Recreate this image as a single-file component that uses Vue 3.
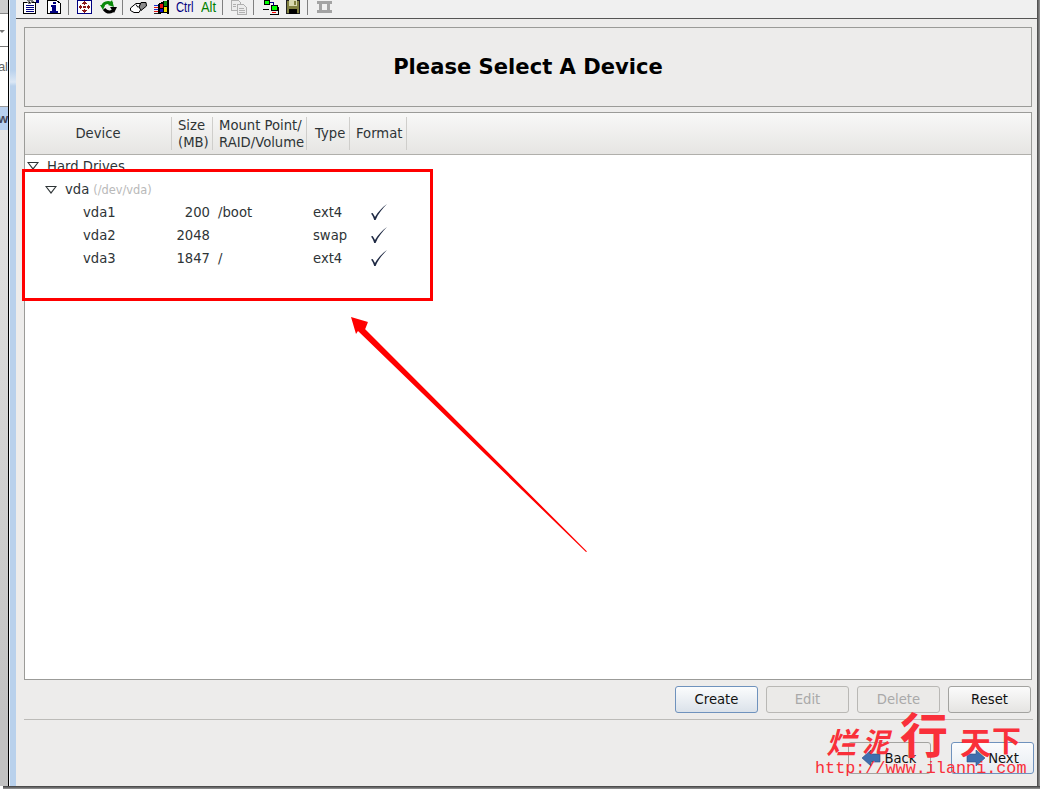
<script setup>
const columns = [
  { label: 'Device', cls: 'c-dev' },
  { label: 'Size\n(MB)', cls: 'c-size' },
  { label: 'Mount Point/\nRAID/Volume', cls: 'c-mount' },
  { label: 'Type', cls: 'c-type' },
  { label: 'Format', cls: 'c-fmt' }
]
const rows = [
  { name: 'vda1', size: '200', mount: '/boot', type: 'ext4' },
  { name: 'vda2', size: '2048', mount: '', type: 'swap' },
  { name: 'vda3', size: '1847', mount: '/', type: 'ext4' }
]
const actions = [
  { label: 'Create', cls: 'focus' },
  { label: 'Edit', cls: 'off' },
  { label: 'Delete', cls: 'off' },
  { label: 'Reset', cls: '' }
]
</script>

<template>
  <div class="screen">
    <div class="desk">
      <aside class="strip">
        <div class="s-top"></div>
        <div class="s-combo"><span class="s-caret"></span></div>
        <div class="s-text"><span>al</span></div>
        <div class="s-sel"><span>w</span></div>
        <div class="s-rest"></div>
      </aside>
      <div class="blue"></div>
      <main class="win">
        <div class="toolbar">
          <svg class="ic" width="16" height="15" viewBox="0 0 16 15" shape-rendering="crispEdges"><path d="M.5 2.500h12v11H.5z" fill="#fff" stroke="#000"/><path d="M3 5.500h8M3 7.500h8M3 9.500h8M3 11.500h8" stroke="#000080"/><path d="M4 0h6v1H4zM5 1h2v1H5zM8 1h3v1H8zM4 2h2v1H4zM7 2h2v1H7zM5 3h3v1H5z" fill="#777"/><path d="M13 0h3v3h-3z" fill="#000080"/></svg>
          <svg class="ic g2" width="14" height="15" viewBox="0 0 14 15" shape-rendering="crispEdges"><path d="M.5.500h9l4 3v10H.5z" fill="#fff" stroke="#000"/><path d="M6 2h3v2H6zM4 5h5v6h2v2H3v-2h2V7H4z" fill="#000080"/></svg>
          <i class="sep s1"></i>
          <svg class="ic g3" width="15" height="15" viewBox="0 0 15 15" shape-rendering="crispEdges"><path d="M.5.500h14v13H.5z" fill="#fff" stroke="#000080"/><path d="M7 1h1v1h1v1h1v1H8v1H7V4H5V3h1V2h1zM7 9h1v1h2v1H9v1H8v1H7v-1H6v-1H5v-1h2zM2 6h1V5h1v1h1v2H4v1H3V8H2zM10 6h1V5h1v1h1v2h-1v1h-1V8h-1z" fill="#8b1a1a"/><path d="M6 6h3v2H6z" fill="#8b1a1a"/></svg>
          <svg class="ic g4" width="17" height="15" viewBox="0 0 17 15"><path d="M2.500 7C3 3 8 1 12.500 4" fill="none" stroke="#0a8a0a" stroke-width="3"/><path d="M0 5l5 0-2 5zM12 0l2 7-6-2z" fill="#0a8a0a"/><path d="M4 9c3 4 8 4 10 0" fill="none" stroke="#000" stroke-width="3"/><path d="M10 7h7l-3 6z" fill="#000"/></svg>
          <i class="sep s2"></i>
          <svg class="ic g5" width="17" height="15" viewBox="0 0 17 15"><path d="M.5 8L6 3.500h5l-2 3 2 2.500-2 3.500H4L.5 10.500z" fill="#fff" stroke="#000"/><path d="M11 2.500h5l.5 3.500L11 10.500 9 7z" fill="#8a8a8a" stroke="#000"/><path d="M6 4.500l2 3" stroke="#000" fill="none"/></svg>
          <svg class="ic g6" width="16" height="15" viewBox="0 0 16 15" shape-rendering="crispEdges"><path d="M0 5h4v1H0zM0 9h4v1H0z" fill="#2030d0"/><path d="M0 7h4v1H0zM0 11h4v1H0z" fill="#e01010"/><path d="M0 13h4v1H0z" fill="#222"/><path d="M4 4l6-3 5-1v14l-5-1-6 1z" fill="#000"/><path d="M6 4h3v4H6z" fill="#f01010"/><path d="M10 1h3v5h-3z" fill="#108a10"/><path d="M6 9h3v3H6z" fill="#1010c0"/><path d="M10 7h3v5h-3z" fill="#f0e000"/></svg>
          <span class="key ctrl">Ctrl</span>
          <span class="key alt">Alt</span>
          <i class="sep s3"></i>
          <svg class="ic g7" width="16" height="15" viewBox="0 0 16 15" shape-rendering="crispEdges"><path d="M.5.500h7l2 2v8H.5z" fill="#ececec" stroke="#b0b0b0"/><path d="M6.500 4.500h6l3 3v7h-9z" fill="#ececec" stroke="#b0b0b0"/><path d="M8 8.500h5M8 10.500h6M8 12.500h6M2 4.500h3M2 6.500h3" stroke="#b0b0b0"/></svg>
          <i class="sep s4"></i>
          <svg class="ic g8" width="16" height="15" viewBox="0 0 16 15" shape-rendering="crispEdges"><path d="M1.500 .5h5v4h-5z" fill="#0f0" stroke="#000"/><path d="M8.500 5.500h6v5h-6z" fill="#0f0" stroke="#000"/><path d="M6.500 2.500h4v3" fill="none" stroke="#000080"/><path d="M0 9.500h6" stroke="#000"/><path d="M9 12.500h4" stroke="#f00"/><path d="M15.500 7v7.500H7" fill="none" stroke="#000"/></svg>
          <svg class="ic g9" width="14" height="15" viewBox="0 0 14 15" shape-rendering="crispEdges"><path d="M.5 0h13v13.500H.5z" fill="#808040" stroke="#222"/><path d="M3 0h8v6H3z" fill="#d8d8b0"/><path d="M3 9h8v5H3z" fill="#000"/><path d="M8 1h2v4H8z" fill="#808040"/></svg>
          <i class="sep s5"></i>
          <svg class="ic g10" width="15" height="15" viewBox="0 0 15 15" shape-rendering="crispEdges"><path d="M0 1h15v3h-2v6h2v3H0v-3h2V4H0z" fill="#a3a3a3"/><path d="M5 4h5v6H5z" fill="#f0f0f0"/></svg>
        </div>

        <div class="body">
          <header class="title"><h1>Please Select A Device</h1></header>

          <section class="table">
            <div class="thead">
              <div v-for="c in columns" :key="c.cls" class="th" :class="c.cls">{{ c.label }}</div>
              <div class="th-fill"></div>
            </div>
            <div class="tbody">
              <div class="tree-row l0"><span class="tri"></span><span>Hard Drives</span></div>
              <div class="tree-row l1"><span class="tri"></span><span>vda</span><small>(/dev/vda)</small></div>
              <div v-for="r in rows" :key="r.name" class="row">
                <span class="r-name">{{ r.name }}</span>
                <span class="r-size">{{ r.size }}</span>
                <span class="r-mount">{{ r.mount }}</span>
                <span class="r-type">{{ r.type }}</span>
                <svg class="r-check" width="17" height="17" viewBox="0 0 17 17"><path d="M1 9.500L2.700 9 5 13C8 8 12 3.500 17 0 12.500 4.500 8 10 5.600 16L4.200 16C3.500 13.500 2.500 11.500 1 9.500z" fill="#1f2a44"/></svg>
              </div>
            </div>
          </section>

          <div class="actions">
            <button v-for="a in actions" :key="a.label" class="btn" :class="a.cls">{{ a.label }}</button>
          </div>
          <div class="rule"></div>
          <div class="nav">
            <button class="btn nav-btn back">
              <svg width="19" height="16" viewBox="0 0 19 16"><path d="M0 8L9 0v4h9v8H9v4z" fill="#3f6fae" stroke="#2c4f85" stroke-width=".6"/></svg>
              <span>Back</span>
            </button>
            <button class="btn nav-btn focus next">
              <svg width="19" height="16" viewBox="0 0 19 16"><path d="M19 8L10 0v4H1v8h9v4z" fill="#3f6fae" stroke="#2c4f85" stroke-width=".6"/></svg>
              <span>Next</span>
            </button>
          </div>
        </div>
      </main>
      <div class="edge"></div>
    </div>
    <div class="foot"></div>

    <div class="redbox"></div>
    <svg class="arrow" width="260" height="255" viewBox="0 0 260 255">
      <path d="M11 12L28 17 22 21 247 246.500 246 247 18 26 16 29z" fill="#f00"/>
      <path d="M20 21L28 17 24 27 247 246.500z" fill="#f00"/>
    </svg>
    <div class="mark">
      <span class="m1">烂</span><span class="m2">泥</span><span class="m3">行</span><span class="m4">天</span><span class="m5">下</span>
      <span class="url">http://www.ilanni.com</span>
    </div>
  </div>
</template>

<style>
html, body { margin: 0; background: #fff; overflow: hidden; }
</style>

<style scoped>
.screen {
  position: relative;
  width: 1041px;
  height: 790px;
  display: flex;
  flex-direction: column;
  overflow: hidden;
  background: #fff;
  font-family: "DejaVu Sans", sans-serif;
  font-size: 13.2px;
  color: #2e3436;
}
.desk { display: flex; height: 786px; flex: none; }
.foot {
  height: 3px;
  flex: none;
  margin: 0 1px 0 3px;
  background: linear-gradient(#3c3c3c, #999);
}
.strip {
  width: 8px;
  flex: none;
  display: flex;
  flex-direction: column;
  background: #fff;
  overflow: hidden;
  font-family: "Liberation Sans", sans-serif;
  font-size: 13px;
}
.s-top { height: 13px; background: #cdcdcd; border-bottom: 1px solid #888; }
.s-combo { height: 32px; border-bottom: 1px solid #777; position: relative; display: flex; align-items: center; }
.s-caret { width: 0; height: 0; border: 3px solid transparent; border-top: 3px solid #777; margin: 6px 0 0 -1px; }
.s-text { height: 59px; border-bottom: 1px solid #999; display: flex; align-items: center; color: #666; justify-content: flex-end; white-space: nowrap; }
.s-text span { margin-top: -20px; }
.s-sel { height: 23px; background: #b8d0ef; color: #445; display: flex; align-items: center; justify-content: flex-end; font-weight: 700; }
.s-rest { flex: 1; background: linear-gradient(#e6e6e6, #c2c2c2 90%); }
.blue {
  width: 7px;
  flex: none;
  border-left: 1px solid #000;
  background:
    linear-gradient(90deg, #f2f6fb 0 1px, transparent 1px),
    linear-gradient(#b9d1ec 0 70px, #dbe7f5 82px, #b9d1ec 86px);
}
.win {
  flex: 1;
  background: #edeceb;
  display: flex;
  flex-direction: column;
  min-width: 0;
}
.edge {
  width: 3px;
  flex: none;
  background: linear-gradient(90deg, #444, #999);
  margin-right: 1px;
}
.toolbar {
  height: 19px;
  flex: none;
  box-sizing: border-box;
  display: flex;
  align-items: flex-start;
  background: #f0f0f0;
  border-bottom: 1px solid #555;
  padding-left: 7px;
  overflow: hidden;
}
.ic { flex: none; display: block; }
.g2 { margin-left: 8px; }
.sep { flex: none; width: 1px; height: 15px; background: #808080; }
.s1 { margin-left: 7px; }
.g3 { margin-left: 8px; }
.g4 { margin-left: 8px; }
.s2 { margin-left: 5px; }
.g5 { margin-left: 7px; }
.g6 { margin-left: 7px; }
.key {
  flex: none;
  font-family: "Liberation Sans", sans-serif;
  font-size: 14px;
  line-height: 14px;
  transform-origin: left top;
}
.ctrl { color: #000080; margin-left: 6px; width: 17px; transform: scaleX(.8); }
.alt { color: #008000; margin-left: 8px; width: 15px; transform: scaleX(.92); }
.s3 { margin-left: 6px; }
.g7 { margin-left: 8px; }
.s4 { margin-left: 6px; }
.g8 { margin-left: 9px; }
.g9 { margin-left: 7px; }
.s5 { margin-left: 7px; }
.g10 { margin-left: 9px; }

.body {
  flex: 1;
  padding: 8px 5px 0 8px;
  display: flex;
  flex-direction: column;
  min-height: 0;
}
.title {
  flex: none;
  height: 80px;
  box-sizing: border-box;
  border: 1px solid #9b9b98;
  display: flex;
  align-items: center;
  justify-content: center;
}
.title h1 { margin: 0 0 1px; font-size: 21.1px; font-weight: 700; color: #000; }
.table {
  flex: none;
  margin-top: 5px;
  height: 568px;
  box-sizing: border-box;
  border: 1px solid #9b9b98;
  background: #fff;
  display: flex;
  flex-direction: column;
}
.thead {
  height: 42px;
  flex: none;
  display: flex;
  box-sizing: border-box;
  border-bottom: 1px solid #b0afab;
  background: linear-gradient(#f8f8f7, #e6e5e3);
  padding: 4px 0;
}
.th {
  flex: none;
  white-space: pre-line;
  line-height: 17px;
  box-sizing: border-box;
  border-right: 1px solid #cfcecb;
  display: flex;
  align-items: center;
  color: #2e3436;
}
.th-fill { flex: 1; }
.c-dev { width: 147px; justify-content: center; }
.c-size { width: 41px; padding-left: 6px; }
.c-mount { width: 94px; padding-left: 6px; }
.c-type { width: 43px; padding-left: 8px; }
.c-fmt { width: 57px; padding-left: 6px; }
.tbody { flex: 1; overflow: hidden; }
.tree-row { display: flex; align-items: center; }
.tri {
  width: 0; height: 0; flex: none;
  position: relative;
  border-left: 6px solid transparent;
  border-right: 6px solid transparent;
  border-top: 8px solid #2e3436;
}
.tri::after {
  content: "";
  position: absolute;
  left: -4px; top: -7px;
  border-left: 4px solid transparent;
  border-right: 4px solid transparent;
  border-top: 5px solid #fff;
}
.l0 { height: 22px; padding-left: 2px; gap: 8px; }
.l1 { height: 23px; margin-top: 1px; padding-left: 20px; gap: 8px; }
.l1 small { font-size: 11.4px; color: #b9b9b9; margin-left: -4px; margin-top: 1px; }
.row {
  height: 23px;
  display: grid;
  grid-template-columns: 95px 32px 103px 57px 17px;
  padding-left: 58px;
  align-items: center;
  white-space: nowrap;
}
.r-size { text-align: right; direction: rtl; }
.r-mount { padding-left: 8px; }
.actions {
  flex: none;
  display: flex;
  justify-content: flex-end;
  gap: 8px;
  margin-top: 6px;
  padding-right: 1px;
}
.btn {
  width: 83px;
  height: 27px;
  box-sizing: border-box;
  border: 1px solid #a3a3a0;
  border-radius: 3px;
  background: linear-gradient(#fbfbfb, #e5e4e2);
  font: 13.2px "DejaVu Sans", sans-serif;
  color: #111;
  padding: 0;
}
.btn.focus {
  border-color: #6f92bd;
  background: linear-gradient(#fbfcfd, #dbe2ea);
}
.btn.off { color: #a9a9a9; background: #ebeae8; border-color: #b9b8b5; }
.rule { flex: none; height: 1px; background: #bcbbb8; margin-top: 6px; margin-right: -1px; }
.nav {
  flex: none;
  display: flex;
  justify-content: flex-end;
  gap: 20px;
  margin-top: 22px;
  margin-right: -2px;
}
.nav-btn {
  height: 32px;
  display: flex;
  align-items: center;
  justify-content: center;
  gap: 3px;
  background: #edeceb;
}
.nav-btn.focus { background: linear-gradient(#fbfcfd, #e6ebf1); }
.nav-btn svg { flex: none; }

.redbox {
  position: absolute;
  left: 22px;
  top: 169px;
  width: 411px;
  height: 132px;
  box-sizing: border-box;
  border: 3px solid #f00;
}
.arrow { position: absolute; left: 340px; top: 305px; }
.mark {
  position: absolute;
  left: 810px;
  top: 700px;
  width: 231px;
  height: 90px;
  color: #f9303a;
  font-family: "Noto Sans CJK SC", sans-serif;
  font-weight: 700;
  line-height: 1;
  pointer-events: none;
}
.mark span { position: absolute; }
.m1 { left: 16px; top: 26px; font-size: 30px; font-style: italic; }
.m2 { left: 52px; top: 27px; font-size: 27px; font-style: italic; }
.m3 { left: 90px; top: 8px; font-size: 48px; }
.m4 { left: 150px; top: 25px; font-size: 31px; }
.m5 { left: 182px; top: 25px; font-size: 29px; }
.url {
  left: 5px;
  top: 59px;
  font: 400 16.8px "Liberation Mono", monospace;
  white-space: nowrap;
}
</style>
